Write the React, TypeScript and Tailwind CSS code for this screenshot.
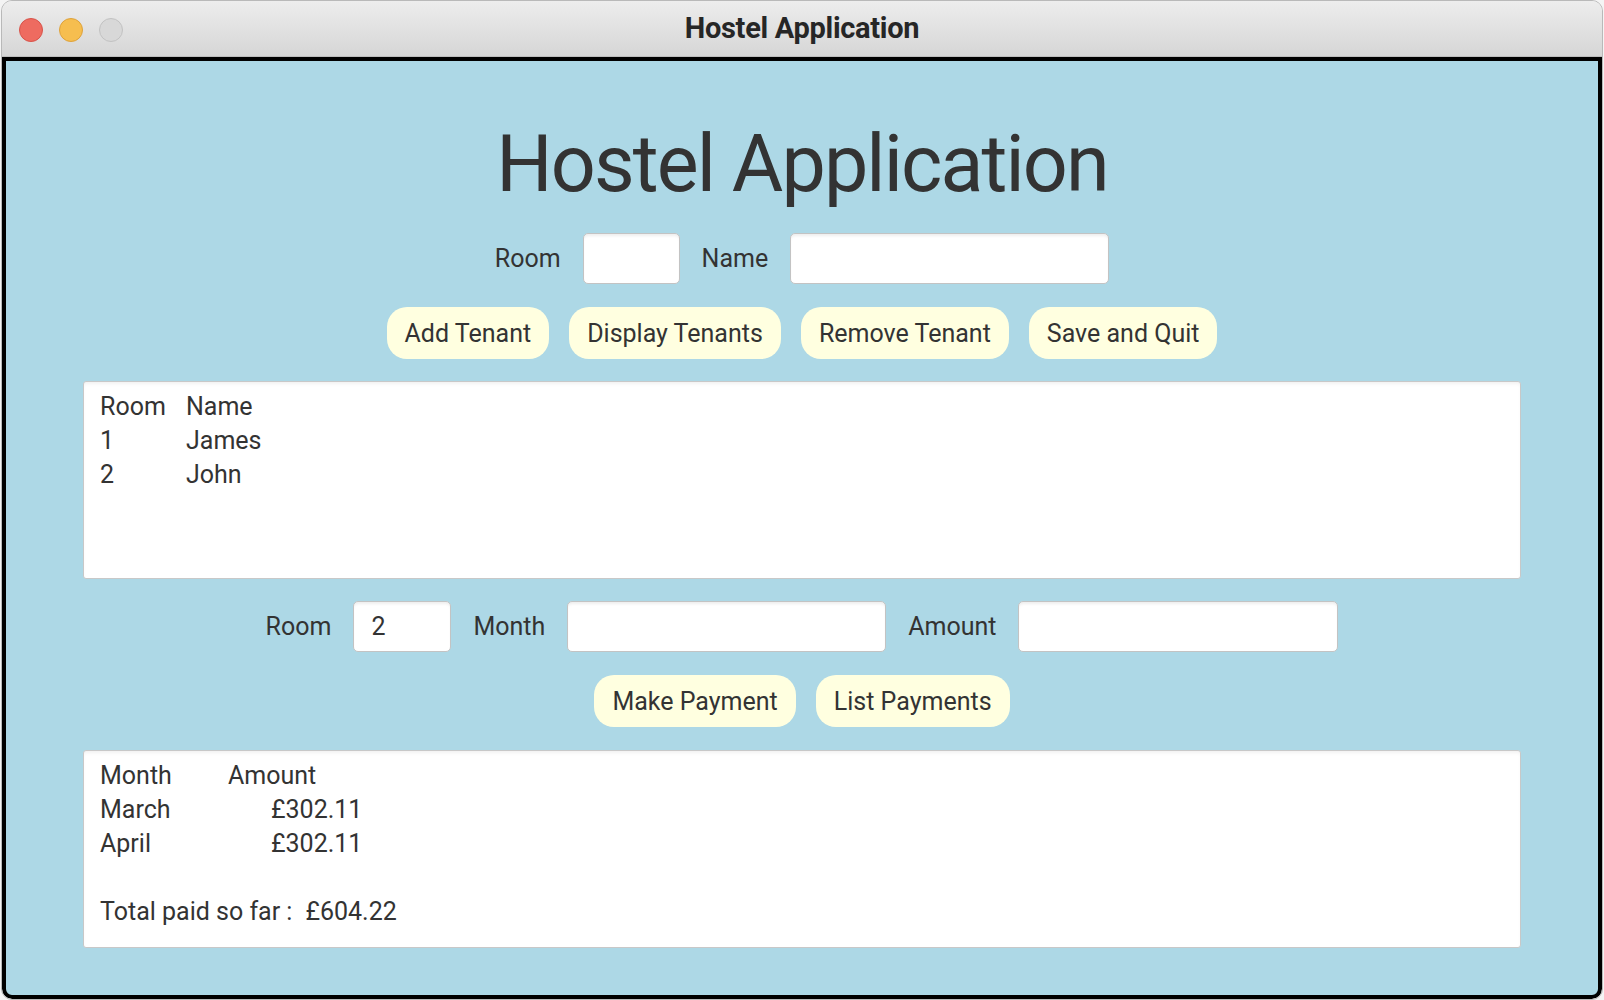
import React from "react";

const Field = ({ width, value }: { width: string; value?: string }) => (
  <div
    className={`${width} h-[51px] bg-white border border-[#c3c3c3] rounded-[5px] shadow-[inset_0_3px_3px_-1px_rgba(0,0,0,0.07)] flex items-center px-[17px] text-[25px] text-[#333]`}
  >
    {value}
  </div>
);

const Btn = ({ label }: { label: string }) => (
  <button className="h-[52px] px-[18px] rounded-[20px] bg-[#ffffe0] text-[25px] text-[#333] leading-none">
    {label}
  </button>
);

const TextBox = ({ children }: { children: React.ReactNode }) => (
  <div className="mx-[77px] h-[198px] bg-white border border-[#c8c8c8] rounded-[3px] shadow-[inset_0_3px_4px_-2px_rgba(0,0,0,0.08)] px-[16px] pt-[8px] text-[25px] leading-[34px] text-[#333]">
    {children}
  </div>
);

export default function App() {
  return (
    <div className="w-full h-[1000px] bg-[#f4f4f4] font-['Roboto','Noto_Sans',sans-serif]">
      <div className="h-full mx-[1px] flex flex-col rounded-[11px] overflow-hidden border border-[#b9b9b9]">
        <div className="h-[56px] shrink-0 relative flex items-center justify-center bg-gradient-to-b from-[#ededed] to-[#d6d6d6] border-b border-[#bdbdbd]">
          <div className="absolute left-[17px] top-[17px] flex gap-[16px]">
            <span className="w-[24px] h-[24px] rounded-full bg-[#ee6b60] border border-[#d8534a]" />
            <span className="w-[24px] h-[24px] rounded-full bg-[#f6be4f] border border-[#dea23b]" />
            <span className="w-[24px] h-[24px] rounded-full bg-[#d8d8d8] border border-[#c2c2c2]" />
          </div>
          <span className="text-[29px] font-bold text-[#262626] tracking-[-0.3px]">Hostel Application</span>
        </div>
        <div className="flex-1 bg-[#add8e6] border-[4px] border-black rounded-b-[10px] flex flex-col">
          <h1 className="mt-[58px] text-center text-[79px] leading-[90px] text-[#333] tracking-[-1.9px]">
            Hostel Application
          </h1>
          <div className="mt-[24px] flex justify-center items-center gap-[22px] text-[25px] text-[#333]">
            <span>Room</span>
            <Field width="w-[97px]" />
            <span>Name</span>
            <Field width="w-[319px]" />
          </div>
          <div className="mt-[23px] flex justify-center gap-[20px]">
            <Btn label="Add Tenant" />
            <Btn label="Display Tenants" />
            <Btn label="Remove Tenant" />
            <Btn label="Save and Quit" />
          </div>
          <div className="mt-[22px]">
            <TextBox>
              <div className="grid grid-cols-[86px_1fr]">
                <span>Room</span>
                <span>Name</span>
                <span>1</span>
                <span>James</span>
                <span>2</span>
                <span>John</span>
              </div>
            </TextBox>
          </div>
          <div className="mt-[22px] flex justify-center items-center gap-[22px] text-[25px] text-[#333]">
            <span>Room</span>
            <Field width="w-[98px]" value="2" />
            <span>Month</span>
            <Field width="w-[319px]" />
            <span>Amount</span>
            <Field width="w-[320px]" />
          </div>
          <div className="mt-[23px] flex justify-center gap-[20px]">
            <Btn label="Make Payment" />
            <Btn label="List Payments" />
          </div>
          <div className="mt-[23px]">
            <TextBox>
              <div className="grid grid-cols-[128px_1fr]">
                <span>Month</span>
                <span>Amount</span>
                <span>March</span>
                <span className="pl-[43px]">£302.11</span>
                <span>April</span>
                <span className="pl-[43px]">£302.11</span>
              </div>
              <div className="h-[34px]" />
              <div className="flex">
                <span>Total paid so far :</span>
                <span className="pl-[13px]">£604.22</span>
              </div>
            </TextBox>
          </div>
        </div>
      </div>
    </div>
  );
}
